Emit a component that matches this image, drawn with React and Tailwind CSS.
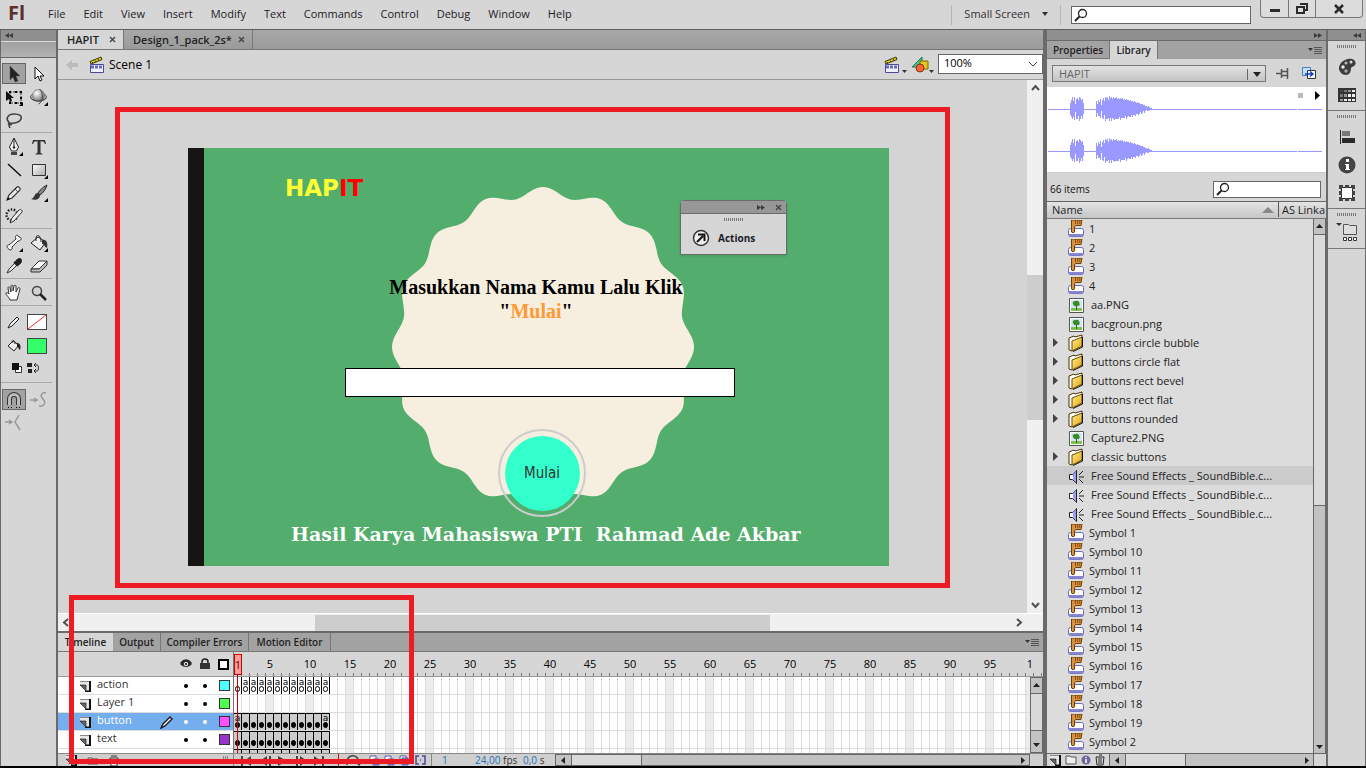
import React, { useState } from "react";
import clsx from "clsx";

const MENUS = ["File", "Edit", "View", "Insert", "Modify", "Text", "Commands", "Control", "Debug", "Window", "Help"];

const LIBRARY = [
  { type: "symbol", name: "1" },
  { type: "symbol", name: "2" },
  { type: "symbol", name: "3" },
  { type: "symbol", name: "4" },
  { type: "bitmap", name: "aa.PNG" },
  { type: "bitmap", name: "bacgroun.png" },
  { type: "folder", name: "buttons circle bubble" },
  { type: "folder", name: "buttons circle flat" },
  { type: "folder", name: "buttons rect bevel" },
  { type: "folder", name: "buttons rect flat" },
  { type: "folder", name: "buttons rounded" },
  { type: "bitmap", name: "Capture2.PNG" },
  { type: "folder", name: "classic buttons" },
  { type: "sound", name: "Free Sound Effects _ SoundBible.c..." },
  { type: "sound", name: "Free Sound Effects _ SoundBible.c..." },
  { type: "sound", name: "Free Sound Effects _ SoundBible.c..." },
  { type: "symbol", name: "Symbol 1" },
  { type: "symbol", name: "Symbol 10" },
  { type: "symbol", name: "Symbol 11" },
  { type: "symbol", name: "Symbol 12" },
  { type: "symbol", name: "Symbol 13" },
  { type: "symbol", name: "Symbol 14" },
  { type: "symbol", name: "Symbol 15" },
  { type: "symbol", name: "Symbol 16" },
  { type: "symbol", name: "Symbol 17" },
  { type: "symbol", name: "Symbol 18" },
  { type: "symbol", name: "Symbol 19" },
  { type: "symbol", name: "Symbol 2" },
];

const LAYERS = [
  { name: "action", color: "bg-[#4dffff]", kind: "blank", scripts: [2, 3, 4, 5, 6, 7, 8, 9, 10, 11, 12] },
  { name: "Layer 1", color: "bg-[#4fff4f]", kind: "none", scripts: [] },
  { name: "button", color: "bg-[#ff4fff]", kind: "filled", scripts: [1, 12] },
  { name: "text", color: "bg-[#9933cc]", kind: "filled", scripts: [] },
];

const FRAMES = Array.from({ length: 140 }, (_, i) => i + 1);

// half heights of the sound preview, one value per pixel column
const BURST = [6, 9, 12, 8, 12, 5, 10, 11, 9, 12, 11, 9, 10, 6];
const TAIL = [8, 5, 9, 7, 10, 4, 9, 11, 8, 12, 11, 12, 9, 13, 11, 12, 10, 12, 11, 11, 12, 10, 11, 10, 11, 10, 11, 9, 10, 9, 10, 9, 9, 8, 9, 8, 8, 7, 8, 7, 6, 7, 6, 6, 5, 5, 5, 4, 4, 3, 3, 2, 3, 2, 1, 1, 1];

function wavePath(y) {
  const bars = (list, x0) => list.map((h, i) => `M${x0 + i + 0.5} ${y - h}v${h * 2 - (i % 3)}`).join("");
  return bars(BURST, 23) + bars(TAIL, 49);
}

// badge outline with sixteen scallops
function badgePath(cx, cy, rx, ry) {
  const pts = [];
  for (let i = 0; i < 360; i++) {
    const t = (i * Math.PI) / 180;
    const r = 0.97 + 0.03 * Math.cos(16 * t);
    pts.push(`${(cx + rx * r * Math.sin(t)).toFixed(1)} ${(cy - ry * r * Math.cos(t)).toFixed(1)}`);
  }
  return `M${pts.join("L")}Z`;
}

function Svg({ w = 18, h = 18, children, className }) {
  return (
    <svg width={w} height={h} viewBox={`0 0 ${w} ${h}`} fill="none" className={clsx("shrink-0", className)} aria-hidden="true">
      {children}
    </svg>
  );
}

const Corner = () => <path d="M18 14v4h-4z" fill="#000" />;

const icons = {
  select: <path d="M5 1v14l3-3 2 5 3-1-2-5h4z" fill="#222" stroke="#555" strokeWidth=".5" />,
  subselect: <path d="M5 2v12l3-3 2 5 2-1-2-4h4z" fill="#fff" stroke="#111" />,
  transform: (
    <>
      <path d="M5 4h11v11H5z" stroke="#333" strokeDasharray="2 1" />
      <path d="M4 3h2v2H4zM10 3h2v2h-2zM15 3h2v2h-2zM15 9h2v2h-2zM4 14h2v2H4zM10 14h2v2h-2zM15 14h2v2h-2z" fill="#000" />
      <path d="M1 3v10l3-2 1 3 2-1-1-3h3z" fill="#111" />
      <Corner />
    </>
  ),
  rotate3d: (
    <>
      <ellipse cx="8.5" cy="9" rx="8" ry="4" fill="#bbb" stroke="#555" />
      <circle cx="8.500" cy="7.500" r="6" fill="url(#ball)" stroke="#777" strokeWidth=".7" />
      <path d="M8.500 16c5-2 5-12 1-15M1 10c3 4 12 4 15 0" stroke="#444" />
      <Corner />
    </>
  ),
  lasso: (
    <path d="M4 11C0 8 3 3 9 3s8 2 7 5-7 5-11 4c-2-1-2 2 0 2s2-2 0-2c-2 1-1 3 0 5" stroke="#444" strokeWidth="1.600" />
  ),
  pen: (
    <>
      <path d="M9 0L4.500 9l2 4h5l2-4z" fill="#f4f4f4" stroke="#222" />
      <path d="M9 1v8" stroke="#222" />
      <path d="M6 14h6v3H6z" fill="#444" />
      <circle cx="9" cy="9.500" r="1.200" fill="#222" />
      <Corner />
    </>
  ),
  text: (
    <path d="M3 2h12l1 4h-1c-.6-2-1.500-2.700-4.500-2.700V14c0 1.200.5 1.500 2 1.500v1h-7v-1c1.500 0 2-.3 2-1.500V3.300C4.500 3.300 3.600 4 3 6H2z" fill="#333" />
  ),
  line: <path d="M3 3l13 12" stroke="#111" strokeWidth="1.500" />,
  rect: (
    <>
      <path d="M2.500 3.500h13v11h-13z" fill="url(#metal)" stroke="#333" />
      <Corner />
    </>
  ),
  pencil: (
    <>
      <path d="M2 16l2-5 8-8c1-1 4 1 3 3l-8 8z" fill="#eee" stroke="#333" strokeWidth="1.200" />
      <path d="M2 16l1-3 2 2z" fill="#000" />
      <path d="M10 5l3 3" stroke="#444" />
    </>
  ),
  brush: (
    <>
      <path d="M17 1c-4 2-8 6-9 8l2 2c3-2 6-6 7-10z" fill="#888" stroke="#222" />
      <path d="M8 9c-4 0-3 5-7 6 5 2 9 0 9-4z" fill="#333" />
      <Corner />
    </>
  ),
  deco: (
    <>
      <circle cx="7" cy="8" r="5.500" stroke="#222" strokeWidth="2.400" strokeDasharray="1.500 1.500" />
      <path d="M5 16l2-5 7-8c1-1 4 0 3 2l-8 9z" fill="#eee" stroke="#333" />
    </>
  ),
  bone: (
    <>
      <path d="M4 11l7-6c-2-4 2-5 3-2 3 0 3 4-1 4l-6 6c1 3-2 4-3 2-3-1-2-5 0-4z" fill="#f4f4f4" stroke="#333" />
      <Corner />
    </>
  ),
  bucket: (
    <>
      <path d="M1 9l7-6 8 5-6 8z" fill="#eee" stroke="#222" />
      <path d="M6 7c-1-8 5-7 5 1" stroke="#222" />
      <path d="M12 6c5-1 6 4 5 8-3-1-2-4-5-4z" fill="#333" />
      <Corner />
    </>
  ),
  dropper: (
    <>
      <path d="M2 16l2-4 6-6 2 2-6 6z" fill="#eee" stroke="#333" />
      <path d="M9 5l4 4M10 6c3-5 6-5 6-2 0 2-2 3-4 4z" fill="#222" stroke="#222" strokeWidth="2" />
    </>
  ),
  eraser: (
    <>
      <path d="M1 12l8-8h8l-8 8z" fill="#fff" stroke="#333" />
      <path d="M1 12h8l8-8v4l-7 7H1z" fill="#bbb" stroke="#333" />
    </>
  ),
  hand: (
    <path d="M5 16c-1-3-5-6-4-7s3 1 3 1L3 4c0-2 2-1 2 0l1 4V2c0-1 2-1 2 0v5l1-5c0-1 2-1 2 0v6l2-4c1-1 2 0 2 1l-2 7-1 4z" fill="#fff" stroke="#333" />
  ),
  zoom: (
    <>
      <circle cx="7" cy="7" r="4.500" fill="#d2d2d2" stroke="#444" strokeWidth="1.500" />
      <path d="M10 10l6 6" stroke="#222" strokeWidth="2.500" />
    </>
  ),
  magnet: (
    <>
      <path d="M4.500 14V8c0-6 9-6 9 0v6" stroke="#333" strokeWidth="5" />
      <path d="M4.500 14V8c0-6 9-6 9 0v6" stroke="#bbb" strokeWidth="3" />
      <path d="M3 16.500h1M6 16.500h1M11 16.500h1M14 16.500h1" stroke="#000" />
    </>
  ),
  smooth: <path d="M0 9h6M4 7l3 2-3 2M16 2c-5-1-6 3-3 6s2 8-4 7" stroke="#999" strokeWidth="1.500" />,
  straighten: <path d="M0 8h6M4 6l3 2-3 2M14 1l-4 7 5 8" stroke="#999" strokeWidth="1.500" />,
  clapper: (
    <>
      <path d="M1 5.500L12 1l1 2.500L2 8z" fill="#e0d020" stroke="#3a3800" />
      <path d="M3 6l1 1M6 4.500l1 1.500M9 3l1 1.500" stroke="#3a3800" />
      <path d="M1.500 8.500h13v8h-13z" fill="#eef" stroke="#4a4a96" />
      <path d="M2 11h12" stroke="#6a6abb" strokeWidth="3" strokeDasharray="3 1" />
    </>
  ),
  shapes: (
    <>
      <path d="M11 1v10H1z" fill="#45c795" stroke="#187850" />
      <path d="M9 5h8v8H9z" fill="#e5c720" stroke="#7e6600" />
      <circle cx="9" cy="12" r="4" fill="#f06838" stroke="#90310c" />
    </>
  ),
  palette: (
    <>
      <path d="M3 15C-2 10 3 2 10 1c6-1 9 3 7 6-1 2-3 1-4 3 0 3-1 7-5 7-2 0-4-1-5-2z" fill="#3d3d3d" />
      <circle cx="5" cy="9" r="1.700" fill="#eee" />
      <circle cx="8" cy="5" r="1.500" fill="#bbb" />
      <circle cx="13" cy="4" r="1.500" fill="#ddd" />
      <circle cx="8" cy="13" r="1.700" fill="#aaa" />
    </>
  ),
  swatches: (
    <>
      <path d="M0 2h18v14H0z" fill="#333" />
      <path d="M2 4h3v2H2z" fill="#444" />
      <path d="M6 4h3v2H6zM2 8h3v3H2z" fill="#777" />
      <path d="M10 4h3v2h-3zM6 8h3v3H6zM2 13h3v2H2z" fill="#999" />
      <path d="M14 4h3v2h-3zM10 8h3v3h-3zM6 13h3v2H6zM14 8h3v3h-3zM10 13h3v2h-3zM14 13h3v2h-3z" fill="#eee" />
    </>
  ),
  align: (
    <>
      <path d="M2.500 2v14" stroke="#222" />
      <path d="M4 3h8v5H4z" fill="#777" />
      <path d="M4 10h13v5H4z" fill="#2a2a2a" />
    </>
  ),
  info: (
    <>
      <circle cx="9" cy="9" r="8.500" fill="#444" />
      <path d="M8 3h3v3H8zM7 8h4v5h1v1H7v-1h1V9H7z" fill="#fff" />
    </>
  ),
  box: (
    <>
      <path d="M3.500 3.500h11v11h-11z" fill="#fff" stroke="#222" />
      <path d="M1 1h4v3H4v1H1zM7 1h4v3H7zM13 1h4v4h-3V4h-1zM1 7h3v4H1zM14 7h3v4h-3zM1 13h3v1h1v3H1zM7 14h4v3H7zM14 13h3v4h-4v-3h1z" fill="#444" />
    </>
  ),
};

function SheetIcon() {
  return (
    <Svg w={11} h={12}>
      <path d="M0 1h10v10H7L0 5z" fill="#e8e8e8" />
      <path d="M0 1.500h9.500" stroke="#888" />
      <path d="M10 1v10.500H5" stroke="#111" strokeWidth="2" />
      <path d="M0 5h6v6z" fill="#666" stroke="#222" strokeWidth=".7" />
    </Svg>
  );
}

function ItemIcon({ type }) {
  if (type === "symbol") {
    return (
      <Svg w={18} h={18}>
        <rect x="1.500" y="8.500" width="15" height="8" rx="2" fill="#fff" stroke="#6a6aae" />
        <path d="M2 14h14v1q0 1.500-2 1.500H4q-2 0-2-1.500z" fill="#8585d4" />
        <path d="M4.500 0v12q1.500 1.500 3 0V7l1-1.500h5.500L15 0z" fill="#d8913c" stroke="#6e3f0a" />
        <path d="M8.500 0v4M10.700 0v4M12.800 0v4" stroke="#6e3f0a" strokeWidth=".8" />
      </Svg>
    );
  }
  if (type === "bitmap") {
    return (
      <Svg w={18} h={18}>
        <path d="M2.500 2.500h14v14h-14z" fill="#fff" stroke="#555" />
        <path d="M4 4h11v11H4z" fill="#cfe6f6" />
        <path d="M4 12h11v3H4z" fill="#79c44c" />
        <path d="M9 10h1v4H9z" fill="#6d4a20" />
        <path d="M6 8c-1-2 1-3 2-3s3-1 4 1 1 4-1 4-4 1-5-2z" fill="#3b8a28" />
      </Svg>
    );
  }
  if (type === "folder") {
    return (
      <Svg w={18} h={18}>
        <path d="M2 4l5-2 1 1 7-2v4L5 17l-3-1z" fill="#fff" stroke="#4a3500" />
        <path d="M5 7l10-4v9L5 17z" fill="url(#gold)" stroke="#6a4c00" />
        <path d="M15.500 3v10L6 17.500" stroke="#111" />
      </Svg>
    );
  }
  return (
    <Svg w={18} h={18}>
      <path d="M2.500 7.500h3l4-4v13l-4-4h-3z" fill="#fff" stroke="#222" />
      <path d="M6 7l3-3v12l-3-4z" fill="#9c9cf4" />
      <path d="M12 8l4-4M12 10h5M12 12l4 4" stroke="#222" />
    </Svg>
  );
}

function Grip() {
  return (
    <Svg w={20} h={3}>
      <path d="M0 1.500h20" stroke="#777" strokeWidth="3" strokeDasharray="1 1" shapeRendering="crispEdges" />
    </Svg>
  );
}

function Chevrons({ flip }) {
  return (
    <Svg w={8} h={7} className={flip ? "rotate-180" : ""}>
      <path d="M0 1l4 2.500L0 6zM4 1l4 2.500L4 6z" fill="#3a3a3a" />
    </Svg>
  );
}

function Cross() {
  return (
    <Svg w={7} h={7}>
      <path d="M1 1l5 5M6 1L1 6" stroke="#444" strokeWidth="1.400" />
    </Svg>
  );
}

function Arrow({ dir }) {
  const d = { up: "M1 6h7L4.500 2z", down: "M1 3h7L4.500 7z", left: "M6 1v7L2 4.500z", right: "M3 1v7l4-3.500z" };
  return (
    <Svg w={9} h={9}>
      <path d={d[dir]} fill="#222" />
    </Svg>
  );
}

function Caret({ dir }) {
  const d = { up: "M1 6l3.500-4L8 6", down: "M1 3l3.500 4L8 3", left: "M6 1L2 4.500 6 8", right: "M3 1l4 3.500L3 8" };
  return (
    <Svg w={9} h={9}>
      <path d={d[dir]} stroke="#505050" strokeWidth="2" />
    </Svg>
  );
}

function PanelMenu() {
  return (
    <button aria-label="Panel menu" className="mr-1 ml-auto self-center">
      <Svg w={14} h={9}>
        <path d="M0 2h5L2.500 5z" fill="#333" />
        <path d="M6 1.500h8M6 3.500h8M6 5.500h8M6 7.500h8" stroke="#555" />
      </Svg>
    </button>
  );
}

function MagnifierIcon() {
  return (
    <Svg w={14} h={14}>
      <circle cx="8.500" cy="5.500" r="4" stroke="#222" strokeWidth="1.300" />
      <path d="M5.500 8.500L1 13" stroke="#222" strokeWidth="2" />
    </Svg>
  );
}

function MenuBar() {
  return (
    <header className="flex h-[29px] shrink-0 items-center bg-[#d6d6d6] pl-2">
      <span className="w-10 pb-1 font-['Open_Sans',sans-serif] text-xl leading-6 font-bold text-[#5b2f2f]">Fl</span>
      <nav className="flex gap-[18px] pb-0.5 text-[#1c1c28]">
        {MENUS.map((m) => (
          <button key={m}>{m}</button>
        ))}
      </nav>
      <div className="ml-auto flex h-full items-center">
        <span className="h-5 w-px bg-[#b5b5b5]" />
        <button className="ml-3 flex items-center gap-3 pb-0.5 text-[#333]">
          Small Screen
          <Svg w={6} h={4}>
            <path d="M0 0h6L3 4z" fill="#333" />
          </Svg>
        </button>
        <span className="ml-3 h-5 w-px bg-[#b5b5b5]" />
        <label className="ml-[10px] flex h-[18px] w-[180px] items-center border border-[#666] bg-white pl-0.5">
          <MagnifierIcon />
          <input aria-label="Search help" className="min-w-0 flex-1 outline-none" />
        </label>
        <div className="mr-[3px] ml-[9px] flex h-[18px] self-start rounded-b border border-t-0 border-[#777] bg-[#dcdcdc]">
          <button aria-label="Minimize" className="flex w-7 items-center justify-center border-r border-[#777]">
            <Svg w={10} h={12}>
              <path d="M0 6h10v3H0z" fill="#2b2b2b" />
            </Svg>
          </button>
          <button aria-label="Restore" className="flex w-[27px] items-center justify-center border-r border-[#777]">
            <Svg w={12} h={12}>
              <path d="M4 1h7v6H8M1 4h7v6H1z" stroke="#2b2b2b" strokeWidth="2" />
            </Svg>
          </button>
          <button aria-label="Close" className="flex w-[46px] items-center justify-center">
            <Svg w={10} h={10}>
              <path d="M1 1l8 8M9 1L1 9" stroke="#2b2b2b" strokeWidth="2.500" />
            </Svg>
          </button>
        </div>
      </div>
    </header>
  );
}

const TOOL_GROUPS = [
  ["select", "subselect", "transform", "rotate3d", "lasso"],
  ["pen", "text", "line", "rect", "pencil", "brush", "deco"],
  ["bone", "bucket", "dropper", "eraser"],
  ["hand", "zoom"],
];

function ToolButton({ name, active, onClick }) {
  return (
    <button
      aria-label={name}
      onClick={onClick}
      className={clsx("flex h-[19px] w-[22px] items-center justify-center justify-self-center", active && "bg-[#a2a2a2] outline outline-[#666]")}
    >
      <Svg>{icons[name]}</Svg>
    </button>
  );
}

function Toolbox() {
  const [tool, setTool] = useState("select");
  return (
    <aside className="flex w-[58px] shrink-0 flex-col border-r-2 border-l border-[#6a6a6a] bg-[#d6d6d6]">
      <div className="flex h-[11px] items-center bg-[#8f8f8f] pl-1">
        <Chevrons flip />
      </div>
      <div className="h-[17px] border-t border-b border-t-[#dcdcdc] border-b-[#666] bg-linear-to-b from-[#a0a0a0] to-[#b3b3b3]" />
      <div className="flex flex-col pt-1.5 pr-1">
        {TOOL_GROUPS.map((group) => (
          <div key={group[0]} className="grid grid-cols-2 gap-y-1 border-b border-[#aaa] pt-1 pb-[3px] first:pt-0">
            {group.map((t) => (
              <ToolButton key={t} name={t} active={t === tool} onClick={() => setTool(t)} />
            ))}
          </div>
        ))}
        <div className="grid grid-cols-2 items-center gap-y-2 border-b border-[#aaa] pt-2 pb-2">
          <Svg w={14} h={14} className="justify-self-center">
            <path d="M1 13l2-4 7-7 2 2-7 7z" fill="#eee" stroke="#222" />
          </Svg>
          <button aria-label="Stroke color" className="h-4 w-5 border border-[#444] bg-white">
            <Svg w={18} h={14}>
              <path d="M0 14L18 0" stroke="#f03030" />
            </Svg>
          </button>
          <Svg w={14} h={14} className="justify-self-center">
            <path d="M1 7l5-5 6 4-5 6zM5 4c0-4 3-3 3 1" fill="#eee" stroke="#222" />
            <path d="M10 4c4 0 4 4 3 7-2-1-1-3-3-3z" fill="#222" />
          </Svg>
          <button aria-label="Fill color" className="h-4 w-5 border border-[#444] bg-[#33ff66]" />
          <Svg w={12} h={12} className="mr-1 justify-self-end">
            <path d="M4.500 4.500h6v6h-6z" fill="#fff" stroke="#333" />
            <path d="M1 1h7v7H1z" fill="#111" />
          </Svg>
          <Svg w={14} h={12}>
            <path d="M0 1h5v4H0zM1 7h4v4H1z" fill="#222" />
            <path d="M7 3h3c2 0 2 6 0 6H7M9 1L7 3l2 2M9 7L7 9l2 2" stroke="#333" />
          </Svg>
        </div>
        <div className="grid grid-cols-2 gap-y-1 pt-[7px]">
          <ToolButton name="magnet" active />
          <ToolButton name="smooth" />
          <ToolButton name="straighten" />
        </div>
      </div>
    </aside>
  );
}

function DocumentTabs() {
  return (
    <div className="flex h-5 shrink-0 border-b border-[#777] bg-linear-to-b from-[#a8a8a8] to-[#9a9a9a] text-[11px] font-semibold text-[#222]">
      <button className="flex w-[66px] items-center justify-between border-r border-[#777] bg-[#d6d6d6] pr-[7px] pl-[9px]">
        HAPIT <Cross />
      </button>
      <button className="flex w-[129px] items-center justify-between border-r border-[#777] pr-[7px] pl-[9px]">
        Design_1_pack_2s* <Cross />
      </button>
    </div>
  );
}

function SceneBar() {
  return (
    <div className="flex h-[30px] shrink-0 items-center border-b border-[#999] bg-[#d6d6d6] pl-[7px] text-xs text-black">
      <Svg w={14} h={12}>
        <path d="M7 1L1 6l6 5V8h6V4H7z" fill="#bbb" />
      </Svg>
      <Svg className="ml-[10px]">{icons.clapper}</Svg>
      <span className="ml-0.5">Scene 1</span>
      <button aria-label="Edit scene" className="ml-auto flex items-end">
        <Svg>{icons.clapper}</Svg>
        <Svg w={5} h={4}>
          <path d="M0 0h5L2.500 3z" fill="#333" />
        </Svg>
      </button>
      <button aria-label="Edit symbols" className="ml-1 flex items-end">
        <Svg>{icons.shapes}</Svg>
        <Svg w={5} h={4}>
          <path d="M0 0h5L2.500 3z" fill="#333" />
        </Svg>
      </button>
      <div className="mb-0.5 ml-1 grid h-5 w-[105px] items-center border border-[#666] bg-white">
        <select aria-label="Zoom" className="col-start-1 row-start-1 w-full appearance-none bg-transparent pl-[5px] text-[11px] outline-none">
          <option>100%</option>
        </select>
        <Svg w={10} h={6} className="pointer-events-none col-start-1 row-start-1 mr-1 justify-self-end">
          <path d="M1 1l4 4 4-4" stroke="#444" />
        </Svg>
      </div>
    </div>
  );
}

function ActionsPanel() {
  return (
    <section className="absolute top-[120px] left-[622px] w-[107px] rounded-t border border-[#6a6a6a] bg-[#d6d6d6] shadow">
      <div className="flex h-[13px] items-center justify-end gap-2.5 border-b border-[#6a6a6a] bg-[#979797] pr-1">
        <Chevrons />
        <Cross />
      </div>
      <div className="flex justify-center pt-1">
        <Grip />
      </div>
      <button className="flex h-[33px] items-center gap-2 pl-[11px] text-[10px] font-bold text-[#1c1c28]">
        <Svg>
          <circle cx="9" cy="9" r="7.500" fill="#eee" stroke="#333" strokeWidth="1.500" />
          <path d="M5 13l6-6M6 5.500h6.500V12" stroke="#111" strokeWidth="2" />
        </Svg>
        Actions
      </button>
    </section>
  );
}

function Stage() {
  return (
    <div className="relative min-w-0 flex-1 overflow-hidden bg-[#d4d4d4]">
      <div className="absolute top-[68px] left-[130px] h-[418px] w-[701px] border-l-[16px] border-[#181413] bg-[#53ad6d]">
        <Svg w={320} h={330} className="absolute top-[34px] left-[178px]">
          <path d={badgePath(161, 165, 151, 160)} fill="#f6eede" />
        </Svg>
        <h1 className="absolute top-[26px] left-[81px] font-['DejaVu_Sans',sans-serif] text-[23px] leading-7 font-bold text-[#ffff33]">
          HAP<span className="text-[#ff0000]">IT</span>
        </h1>
        <p className="absolute top-[127px] left-[172px] w-[320px] text-center font-['Liberation_Serif',serif] text-xl leading-6 font-bold whitespace-nowrap text-black">
          Masukkan Nama Kamu Lalu Klik
          <br />
          "<span className="text-[#ff9933]">Mulai</span>"
        </p>
        <input aria-label="Nama" className="absolute top-[220px] left-[141px] h-[29px] w-[390px] border border-black bg-white px-2 text-base" />
        <div className="absolute top-[281px] left-[294px] flex size-[88px] items-center justify-center rounded-full border-2 border-[#ccc]">
          <button className="size-[75px] rounded-full bg-[#33ffcc] font-['DejaVu_Sans_Condensed','DejaVu_Sans',sans-serif] text-[15px] text-[#333]">Mulai</button>
        </div>
        <p className="absolute top-[374px] left-[87px] font-['DejaVu_Serif',serif] text-[19px] leading-6 font-bold whitespace-pre text-white">
          Hasil Karya Mahasiswa PTI  Rahmad Ade Akbar
        </p>
      </div>
      <ActionsPanel />
      <div className="pointer-events-none absolute top-[27px] left-[57px] h-[481px] w-[835px] border-[5px] border-[#ed1c24]" />
    </div>
  );
}

function Frame({ n, layer }) {
  const keyed = layer.kind !== "none" && n <= 12;
  return (
    <div
      className={clsx(
        "flex h-full w-2 shrink-0 flex-col items-center justify-end border-r",
        keyed ? "border-black" : "border-[#dcdcdc]",
        keyed && layer.kind === "filled" && "border-t bg-[#ccc]",
        !keyed && n % 5 === 0 && "bg-[#ececec]"
      )}
    >
      {keyed && layer.scripts.includes(n) && <span className="h-[7px] font-['DejaVu_Sans',sans-serif] text-[9px] leading-[6px] text-black">a</span>}
      {keyed && <span className={clsx("mb-0.5 h-1.5 w-[5px] rounded-full border border-black", layer.kind === "filled" && "bg-black")} />}
    </div>
  );
}

function LayerRow({ layer, selected }) {
  return (
    <div className={clsx("flex h-[18px] shrink-0 items-center border-b border-[#dcdcdc] pl-[22px]", selected ? "bg-[#75aeee] text-white" : "bg-white text-[#333]")}>
      <SheetIcon />
      <span className="ml-[6px] w-[60px] pb-[3px]">{layer.name}</span>
      <span className="flex w-5 justify-center">
        {selected && (
          <Svg w={14} h={14}>
            <path d="M1 13l2-4 7-7 2 2-7 7z" fill="#fff" stroke="#222" strokeWidth="1.500" />
          </Svg>
        )}
      </span>
      <span className={clsx("ml-[7px] size-1 rounded-full", selected ? "bg-white" : "bg-black")} />
      <span className={clsx("ml-[15px] size-1 rounded-full", selected ? "bg-white" : "bg-black")} />
      <span className={clsx("ml-3 size-[11px] border border-[#333]", layer.color)} />
    </div>
  );
}

function Timeline() {
  return (
    <section className="flex h-[135px] shrink-0 flex-col border-t-2 border-[#6a6a6a] bg-[#d6d6d6]">
      <div className="flex h-[19px] shrink-0 border-b border-[#777] bg-[#a2a2a2] text-[10px] font-semibold text-[#222]">
        <button className="w-[55px] bg-[#d6d6d6]">Timeline</button>
        <button className="w-12 border-r border-[#777]">Output</button>
        <button className="w-[88px] border-r border-[#777]">Compiler Errors</button>
        <button className="w-[82px] border-r border-[#777]">Motion Editor</button>
        <PanelMenu />
      </div>
      <div className="flex min-h-0 flex-1">
        <div className="flex w-[175px] shrink-0 flex-col overflow-hidden">
          <div className="flex h-[25px] shrink-0 items-center justify-end gap-2 border-b border-[#999] pr-1">
            <Svg w={12} h={10}>
              <path d="M0 5c3-5 9-5 12 0-3 4-9 4-12 0z" fill="#333" />
              <path d="M1 4c3-4 7-4 10 0" stroke="#222" strokeWidth="1.500" />
              <circle cx="6" cy="5" r="2" fill="#fff" />
              <circle cx="6" cy="5" r="1" fill="#000" />
            </Svg>
            <Svg w={10} h={12}>
              <path d="M2 6V4c0-4 6-4 6 0v2" stroke="#222" strokeWidth="1.500" />
              <path d="M0 5h10v6H0z" fill="#333" />
            </Svg>
            <Svg w={11} h={11}>
              <path d="M1 1h9v9H1z" stroke="#000" strokeWidth="2" fill="#fff" />
            </Svg>
          </div>
          {LAYERS.map((l) => (
            <LayerRow key={l.name} layer={l} selected={l.name === "button"} />
          ))}
          <div className="flex-1 bg-white" />
        </div>
        <div className="relative flex min-w-0 flex-1 flex-col overflow-hidden border-l border-[#777]">
          <div className="flex h-[25px] shrink-0 items-end border-b border-[#999]">
            {FRAMES.map((n) => (
              <div key={n} className="flex h-5 w-2 shrink-0 flex-col items-center justify-between">
                <span className="flex h-4 w-0 justify-center text-black">{n % 5 === 0 && n <= 95 ? n : n === 100 ? "1" : ""}</span>
                <span className="h-[3px] w-px self-end bg-[#777]" />
              </div>
            ))}
          </div>
          <div className="flex min-h-0 flex-1">
            <div className="flex min-w-0 flex-1 flex-col overflow-hidden bg-white">
              {LAYERS.map((l) => (
                <div key={l.name} className="flex h-[18px] shrink-0 overflow-hidden border-b border-[#dcdcdc]">
                  {FRAMES.map((n) => (
                    <Frame key={n} n={n} layer={l} />
                  ))}
                </div>
              ))}
              <div className="flex min-h-0 flex-1">
                {FRAMES.map((n) => (
                  <div key={n} className={clsx("w-2 shrink-0 border-r", n <= 12 ? "border-t border-black bg-[#ccc]" : "border-[#dcdcdc]", n > 12 && n % 5 === 0 && "bg-[#ececec]")} />
                ))}
              </div>
            </div>
            <div className="flex w-[13px] shrink-0 flex-col border border-[#666] bg-[#c2c2c2]">
              <button aria-label="Scroll up" className="flex h-[15px] items-center justify-center">
                <Arrow dir="up" />
              </button>
              <div className="h-[38px] border-t border-b border-[#666] bg-[#dadada]" />
              <button aria-label="Scroll down" className="mt-auto flex h-[15px] items-center justify-center">
                <Arrow dir="down" />
              </button>
            </div>
          </div>
          <div className="absolute top-0.5 left-0 h-full w-2">
            <div className="flex h-[21px] justify-center border border-[#c00] bg-[#ff9c9c] leading-5 text-[#600]">1</div>
            <div className="ml-[3px] h-full w-px bg-[#c00]" />
          </div>
        </div>
      </div>
      <TimelineFooter />
    </section>
  );
}

function TimelineFooter() {
  return (
    <div className="flex h-[13px] shrink-0 items-center overflow-hidden border-t border-[#888] bg-[#cfcfcf] text-[10px] text-[#333]">
      <div className="flex w-[175px] items-center gap-2.5 pl-2">
        <SheetIcon />
        <Svg w={12} h={10}>
          <path d="M1 3h4l1 1h5v5H1z" fill="#eee" stroke="#555" />
        </Svg>
        <Svg w={10} h={12}>
          <path d="M1 4h8l-1 8H2zM2 2h6" fill="#eee" stroke="#333" />
        </Svg>
        <Svg w={6} h={8} className="mr-1 ml-auto">
          <path d="M.5 0v8M2.500 0v8M4.500 0v8" stroke="#888" />
        </Svg>
      </div>
      <div className="flex w-[199px] items-center justify-between border-x border-[#888] pr-1 pl-1.5">
        <Svg w={84} h={11}>
          <path d="M1 1h2v10H1zM11 1v10L4 6zM27 1v10l-7-5zM29 1h2v10h-2zM38 1l9 5-9 5zM56 1h2v10h-2zM60 1l7 5-7 5zM74 1l7 5-7 5zM82 1h2v10h-2z" fill="#444" />
        </Svg>
        <Svg w={32} h={12}>
          <path d="M8.500 0v12M6 7h5" stroke="#d00" />
          <path d="M17 11c-2-12 12-12 12-2M26 7l3 4 3-4" stroke="#444" strokeWidth="1.500" />
        </Svg>
        <Svg w={40} h={12}>
          <path d="M1 2h6v6H1zM16 2h6v6h-6zM31 2h6v6h-6z" fill="#fff" stroke="#5a5aa8" />
          <path d="M4 5h6v6H4zM19 5h6v6h-6zM33 4h6v7h-6z" fill="#8585c0" stroke="#5a5aa8" />
        </Svg>
        <Svg w={12} h={12}>
          <path d="M4 2H1v8h3M7 2h3v8H7M5 6h1" stroke="#4a4a98" strokeWidth="1.500" />
        </Svg>
      </div>
      <div className="flex flex-1 items-center">
        <span className="ml-2.5 w-[33px] text-[#2270b8]">1</span>
        <span className="w-12">
          <span className="border-b border-dotted border-[#2270b8] text-[#2270b8]">24,00</span> fps
        </span>
        <span className="w-8">
          <span className="border-b border-dotted border-[#2270b8] text-[#2270b8]">0,0</span> s
        </span>
        <div className="mr-[13px] flex h-3 flex-1 items-center border border-[#666] bg-[#c2c2c2]">
          <button aria-label="Scroll left" className="flex w-[15px] justify-center">
            <Arrow dir="left" />
          </button>
          <div className="h-full w-[71px] border-r border-l border-[#666] bg-[#dadada]" />
          <button aria-label="Scroll right" className="mr-0.5 ml-auto">
            <Arrow dir="right" />
          </button>
        </div>
      </div>
    </div>
  );
}

function SoundPreview() {
  return (
    <div className="flex h-[86px] shrink-0 items-start justify-between border-b border-[#ccc] bg-white pr-1">
      <Svg w={250} h={84}>
        <path d="M1 22.500h249M1 64.500h249" stroke="#9999ff" />
        <path d={wavePath(22)} stroke="#9999ff" />
        <path d={wavePath(64)} stroke="#9999ff" />
      </Svg>
      <Svg w={24} h={84}>
        <path d="M0 6h5v5H0z" fill="#bbb" />
        <path d="M17 4v9l5-4.500z" fill="#000" />
        <path d="M0 22.500h24M0 64.500h24" stroke="#9999ff" />
      </Svg>
    </div>
  );
}

function LibraryPanel() {
  return (
    <section className="flex w-[283px] shrink-0 flex-col border-r-2 border-l-2 border-[#6a6a6a] bg-[#d6d6d6]">
      <div className="flex h-[11px] shrink-0 items-center justify-end border-b border-[#6a6a6a] bg-[#8f8f8f] pr-1">
        <Chevrons />
      </div>
      <div className="flex h-[18px] shrink-0 bg-[#a2a2a2] text-[10px] font-semibold text-[#222]">
        <button className="w-[63px] border-r border-b border-[#777]">Properties</button>
        <button className="w-12 border-r border-[#777] bg-[#d6d6d6]">Library</button>
        <PanelMenu />
      </div>
      <div className="flex h-7 shrink-0 items-center pr-[9px] pl-[5px]">
        <div className="grid h-[17px] flex-1 items-center border border-[#777] bg-linear-to-b from-[#e2e2e2] to-[#c4c4c4]">
          <select aria-label="Library document" className="col-start-1 row-start-1 w-full appearance-none bg-transparent pb-0.5 pl-1.5 text-[11px] leading-[15px] text-[#666] outline-none">
            <option>HAPIT</option>
          </select>
          <Svg w={14} h={11} className="pointer-events-none col-start-1 row-start-1 mr-1 justify-self-end">
            <path d="M.5 0v11" stroke="#666" />
            <path d="M6 3h8l-4 5z" fill="#222" />
          </Svg>
        </div>
        <button aria-label="Pin library" className="ml-[9px]">
          <Svg w={16} h={14}>
            <path d="M1 7.500h6M6.500 3v9M7 5.500h5M7 9.500h5M12.500 2v11" stroke="#555" strokeWidth="1.500" />
          </Svg>
        </button>
        <button aria-label="New library panel" className="ml-2.5">
          <Svg w={16} h={14}>
            <path d="M1.500 1.500h8v8h-8z" fill="#bfe0ff" stroke="#4b7fb8" />
            <path d="M6.500 4.500h8v8h-8z" fill="#fff" stroke="#333" />
            <path d="M4 8h7M9 5.500L12 8l-3 2.500" stroke="#1239c0" strokeWidth="1.500" />
          </Svg>
        </button>
      </div>
      <SoundPreview />
      <div className="flex h-7 shrink-0 items-center justify-between pt-1 pr-[5px] pl-[3px]">
        <span className="text-[10px] text-[#111]">66 items</span>
        <label className="flex h-[17px] w-[108px] items-center border border-[#666] bg-white pl-0.5">
          <MagnifierIcon />
          <input aria-label="Search library" className="min-w-0 flex-1 outline-none" />
        </label>
      </div>
      <div className="relative min-h-0 flex-1 overflow-hidden border-t border-[#666] bg-[#dcdcdc]">
        <table className="w-full table-fixed border-collapse text-[#222]">
          <thead>
            <tr className="h-4 border-b border-[#777] bg-linear-to-b from-[#e4e4e4] to-[#c6c6c6] text-left">
              <th className="p-0 pl-[5px] leading-4 font-normal">
                <span className="flex items-center justify-between pr-1">
                  Name
                  <Svg w={12} h={6}>
                    <path d="M0 6h12L6 0z" fill="#888" />
                  </Svg>
                </span>
              </th>
              <th className="w-12 p-0 leading-4 font-normal whitespace-nowrap">
                <span className="border-l border-[#555] pl-[3px]">AS Linka</span>
              </th>
            </tr>
          </thead>
          <tbody>
            {LIBRARY.map((item, i) => (
              <tr key={i} className={clsx("h-[19px]", i === 13 && "bg-[#cbcbcb]")}>
                <td colSpan={2} className="p-0">
                  <div className="flex h-[19px] items-center pl-[5px] whitespace-nowrap">
                    <Svg w={15} h={9}>
                      {item.type === "folder" && <path d="M1 0v9l5-4.500z" fill="#444" />}
                    </Svg>
                    <ItemIcon type={item.type} />
                    <span className={item.type === "symbol" ? "pl-1" : "pl-1.5"}>{item.name}</span>
                  </div>
                </td>
              </tr>
            ))}
          </tbody>
        </table>
        <div className="absolute top-[17px] right-0 bottom-0 flex w-[13px] flex-col border-r border-l border-[#666] bg-[#dadada]">
          <button aria-label="Scroll up" className="flex h-4 items-center justify-center border-b border-[#666] bg-[#c2c2c2]">
            <Arrow dir="up" />
          </button>
          <div className="h-[271px] border-b border-[#666]" />
          <button aria-label="Scroll down" className="flex flex-1 items-end justify-center bg-[#c2c2c2] pb-0.5">
            <Arrow dir="down" />
          </button>
        </div>
      </div>
      <div className="flex h-[13px] shrink-0 items-center border-t border-[#666] pl-[3px]">
        <SheetIcon />
        <Svg w={12} h={10} className="ml-1">
          <path d="M1 1h4l1 1h5v7H1z" fill="#eee" stroke="#555" />
        </Svg>
        <Svg w={10} h={10} className="ml-1">
          <circle cx="5" cy="5" r="4.500" fill="#6a6a98" />
          <path d="M5 2v1M5 4v4" stroke="#fff" strokeWidth="1.500" />
        </Svg>
        <Svg w={10} h={12} className="ml-1">
          <path d="M1 3h8l-1 8H2zM4 1h3M4 4v6M6 4v6" stroke="#222" fill="#ddd" />
        </Svg>
        <div className="mr-3 ml-1 flex h-3 flex-1 items-center border-r border-l border-[#666] bg-[#c2c2c2]">
          <button aria-label="Scroll left" className="flex w-[15px] justify-center">
            <Arrow dir="left" />
          </button>
          <div className="h-full w-[61px] border-r border-l border-[#666] bg-[#dadada]" />
          <button aria-label="Scroll right" className="mr-0.5 ml-auto">
            <Arrow dir="right" />
          </button>
        </div>
      </div>
    </section>
  );
}

function Dock() {
  return (
    <aside className="flex w-[38px] shrink-0 flex-col border-r border-[#6a6a6a] bg-[#d6d6d6]">
      <div className="flex h-[11px] shrink-0 items-center justify-end border-b border-[#6a6a6a] bg-[#8f8f8f] pr-1">
        <Chevrons flip />
      </div>
      {[["palette", "swatches"], ["align", "info", "box"]].map((group) => (
        <div key={group[0]} className="flex flex-col items-center gap-2.5 border-b border-[#777] pt-1 pb-1.5">
          <Grip />
          {group.map((name) => (
            <button key={name} aria-label={name}>
              <Svg>{icons[name]}</Svg>
            </button>
          ))}
        </div>
      ))}
      <div className="flex flex-col items-center gap-1.5 border-b border-[#777] pt-1 pb-1.5">
        <Grip />
        <button aria-label="Components">
          <Svg w={22} h={20}>
            <path d="M0 1h6L3 4z" fill="#333" />
            <path d="M7.500 2.500h5l1 1h7v9h-13z" fill="#ddd" stroke="#555" />
            <path d="M7.500 15.500h3v3h-3zM12.500 15.500h3v3h-3zM17.500 15.500h3v3h-3z" stroke="#333" fill="#fff" />
          </Svg>
        </button>
      </div>
    </aside>
  );
}

export default function App() {
  return (
    <div className="relative flex h-screen w-full flex-col overflow-hidden border-b-2 border-black bg-[#d6d6d6] font-['Open_Sans','Noto_Sans',sans-serif] text-[11px] leading-4">
      <svg width="0" height="0" className="absolute" aria-hidden="true">
        <defs>
          <linearGradient id="gold" x1="0" y1="0" x2="1" y2="1">
            <stop offset="0" stopColor="#fff090" />
            <stop offset="1" stopColor="#e0a010" />
          </linearGradient>
          <linearGradient id="metal" x1="0" y1="0" x2="1" y2="1">
            <stop offset="0" stopColor="#fff" />
            <stop offset="1" stopColor="#aaa" />
          </linearGradient>
          <radialGradient id="ball" cx=".35" cy=".3" r=".7">
            <stop offset="0" stopColor="#fff" />
            <stop offset="1" stopColor="#777" />
          </radialGradient>
        </defs>
      </svg>
      <MenuBar />
      <div className="flex min-h-0 flex-1 border-t border-[#5f5f5f]">
        <Toolbox />
        <main className="flex min-w-0 flex-1 flex-col border-r-2 border-[#6a6a6a]">
          <DocumentTabs />
          <SceneBar />
          <div className="flex min-h-0 flex-1">
            <Stage />
            <div className="flex w-4 shrink-0 flex-col items-center bg-[#f0f0f0] py-1">
              <Caret dir="up" />
              <div className="mt-[182px] h-[145px] w-full bg-[#cdcdcd]" />
              <span className="mt-auto">
                <Caret dir="down" />
              </span>
            </div>
          </div>
          <div className="flex h-[18px] shrink-0 items-center border-t border-white bg-[#f0f0f0] pr-5 pl-1">
            <Caret dir="left" />
            <div className="ml-[244px] h-4 w-[455px] bg-[#cdcdcd]" />
            <span className="ml-auto">
              <Caret dir="right" />
            </span>
          </div>
          <Timeline />
        </main>
        <LibraryPanel />
        <Dock />
      </div>
      <div className="pointer-events-none absolute bottom-0.5 left-[69px] h-[169px] w-[345px] border-[5px] border-[#ed1c24]" />
    </div>
  );
}
